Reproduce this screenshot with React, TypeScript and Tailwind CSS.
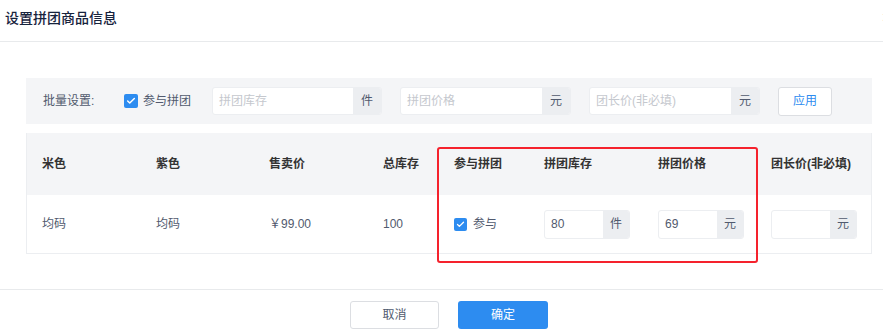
import { Check } from "lucide-react";

const font = { fontFamily: '"Liberation Sans", "Noto Sans CJK SC", sans-serif' };

function Checkbox({ size = 14 }: { size?: number }) {
    return (
        <span
            className="inline-flex shrink-0 items-center justify-center rounded-[2px] bg-[#2d8cf0]"
            style={{ width: size, height: size }}
        >
            <Check className="text-white" size={size - 4} strokeWidth={3.5} />
        </span>
    );
}

function AddonInput({ value, placeholder, unit, w, h, addon }: { value?: string; placeholder?: string; unit: string; w: string; h: string; addon: string }) {
    return (
        <div className={`flex ${w} ${h} rounded-[3px] border border-[#eceef1] bg-white overflow-hidden`}>
            <div className="flex-1 flex items-center pl-[6px] text-[12px]">
                {value ? <span className="text-[#515a6e]">{value}</span> : <span className="text-[#c5c8ce]">{placeholder}</span>}
            </div>
            <div className={`${addon} flex items-center justify-center bg-[#eceef1] text-[12px] text-[#515a6e]`}>{unit}</div>
        </div>
    );
}

const cols = ["w-[114px]", "w-[113px]", "w-[114px]", "w-[71px]", "w-[90px]", "w-[114px]", "w-[113px]", "w-[115px]"];
const heads = ["米色", "紫色", "售卖价", "总库存", "参与拼团", "拼团库存", "拼团价格", "团长价(非必填)"];

export default function App() {
    return (
        <div className="relative w-[883px] h-[332px] bg-white overflow-hidden" style={font}>
            {/* header */}
            <div className="h-[42px] flex justify-between border-b border-[#e8eaec] pl-[5px] pt-[8px]">
                <h1 className="text-[14px] leading-[20px] font-medium text-[#17233d]">设置拼团商品信息</h1>
                <span className="text-[16px] leading-[20px] text-[#999] mr-[-8px]">×</span>
            </div>

            <div className="pl-[26px] pr-[11px] pt-[36px]">
                {/* batch bar */}
                <div className="h-[46px] bg-[#f4f5f7] flex items-center pl-[17px] text-[12px] text-[#515a6e]">
                    <span className="w-[81px] shrink-0">批量设置:</span>
                    <Checkbox />
                    <span className="ml-[5px]">参与拼团</span>
                    <div className="ml-[21px]">
                        <AddonInput placeholder="拼团库存" unit="件" w="w-[170px]" h="h-[28px]" addon="w-[28px]" />
                    </div>
                    <div className="ml-[18px]">
                        <AddonInput placeholder="拼团价格" unit="元" w="w-[171px]" h="h-[28px]" addon="w-[28px]" />
                    </div>
                    <div className="ml-[18px]">
                        <AddonInput placeholder="团长价(非必填)" unit="元" w="w-[171px]" h="h-[28px]" addon="w-[28px]" />
                    </div>
                    <button className="ml-[18px] w-[54px] h-[29px] rounded-[3px] border border-[#dcdee2] bg-white text-[12px] text-[#2d8cf0]">应用</button>
                </div>

                {/* table */}
                <div className="mt-[9px] border-l border-r border-b border-[#eceef1]">
                    <div className="flex h-[62px] bg-[#f4f5f7] items-center text-[12px] font-bold text-[#333]">
                        {heads.map((h, i) => (
                            <div key={h} className={`${cols[i]} shrink-0 pl-[15px]`}>{h}</div>
                        ))}
                    </div>
                    <div className="flex h-[58px] items-center text-[12px] text-[#515a6e]">
                        <div className={`${cols[0]} shrink-0 pl-[15px]`}>均码</div>
                        <div className={`${cols[1]} shrink-0 pl-[15px]`}>均码</div>
                        <div className={`${cols[2]} shrink-0 pl-[15px]`}>￥99.00</div>
                        <div className={`${cols[3]} shrink-0 pl-[15px]`}>100</div>
                        <div className={`${cols[4]} shrink-0 pl-[15px] flex items-center`}>
                            <Checkbox size={13} />
                            <span className="ml-[6px]">参与</span>
                        </div>
                        <div className={`${cols[5]} shrink-0 pl-[15px]`}>
                            <AddonInput value="80" unit="件" w="w-[86px]" h="h-[29px]" addon="w-[26px]" />
                        </div>
                        <div className={`${cols[6]} shrink-0 pl-[15px]`}>
                            <AddonInput value="69" unit="元" w="w-[86px]" h="h-[29px]" addon="w-[26px]" />
                        </div>
                        <div className={`${cols[7]} shrink-0 pl-[15px]`}>
                            <AddonInput unit="元" w="w-[86px]" h="h-[29px]" addon="w-[26px]" />
                        </div>
                    </div>
                </div>
            </div>

            {/* footer */}
            <div className="mt-[35px] border-t border-[#e8eaec] pt-[11px] flex justify-center pl-[15px] gap-[19px]">
                <button className="w-[89px] h-[28px] rounded-[3px] border border-[#dcdee2] bg-white text-[12px] text-[#515a6e]">取消</button>
                <button className="w-[90px] h-[28px] rounded-[3px] bg-[#2d8cf0] text-[12px] text-white">确定</button>
            </div>

            {/* annotation */}
            <div className="absolute left-[437px] top-[147px] w-[321px] h-[116px] border-2 border-[#f5222d] rounded-[3px]" />
        </div>
    );
}
